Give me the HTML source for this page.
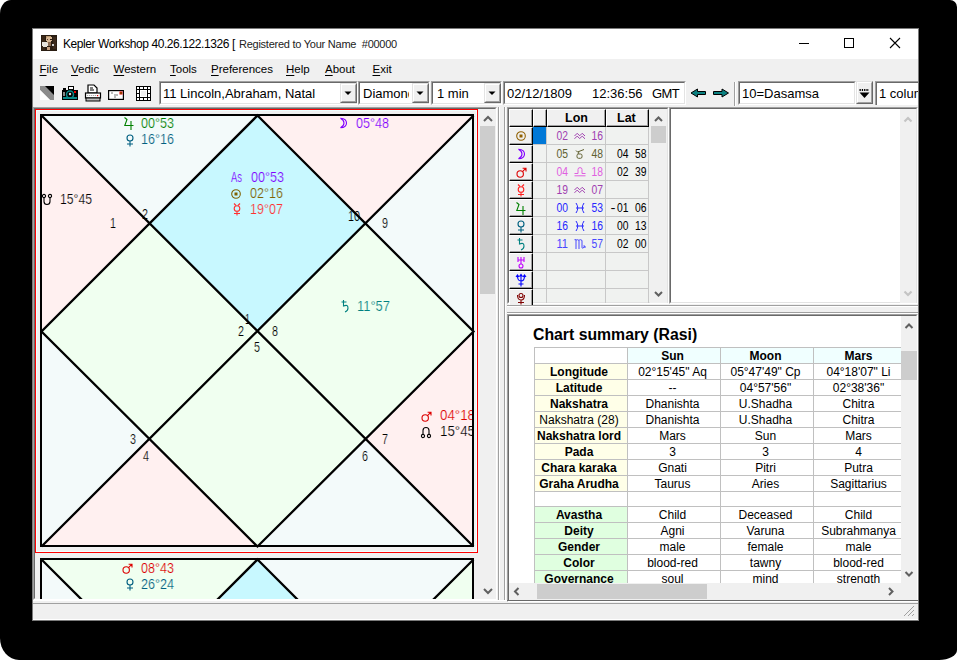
<!DOCTYPE html><html><head><meta charset="utf-8"><style>
html,body{margin:0;padding:0;width:957px;height:660px;overflow:hidden;background:#fff;}
body{font-family:"Liberation Sans", sans-serif;position:relative;} div{box-sizing:border-box;}
</style></head><body>
<div style="position:absolute;left:0px;top:0px;width:957px;height:660px;background:#000;border-radius:11px 7px 18px 19px / 14px 7px 10px 22px;"></div>
<div style="position:absolute;left:32px;top:28px;width:887px;height:593px;background:#f0f0f0;border:1px solid #7a7a7a;"></div>
<div style="position:absolute;left:33px;top:29px;width:885px;height:30px;background:#fff;"></div>
<svg style="position:absolute;left:41px;top:35px" width="16" height="16" viewBox="0 0 16 16"><rect width="16" height="16" fill="#2a1d12"/><rect x="1" y="1" width="3" height="14" fill="#3a2818"/><rect x="12" y="2" width="3" height="12" fill="#3c2a1c"/><path d="M5,1 H10 V2 H11 V6 H10 V8 H6 V6 H5Z" fill="#d8b896"/><path d="M5,1 H10 V2 H6 V3 H5Z" fill="#b89870"/><rect x="6" y="4" width="1" height="1" fill="#5a4030"/><rect x="9" y="4" width="2" height="1" fill="#2a1a10"/><path d="M7,7 H10 V11 H7Z" fill="#8a6a50"/><path d="M1,7 H6 V8 H7 V11 H6 V12 H2 V11 H1Z" fill="#e8e4dc"/><path d="M6,12 H9 V15 H6Z" fill="#c8a080"/><rect x="11" y="9" width="2" height="2" fill="#d0d0d0"/></svg>
<div style="position:absolute;left:63px;top:38px;font-size:12px;color:#000;font-weight:400;white-space:pre;line-height:1;letter-spacing:-0.42px;">Kepler Workshop 40.26.122.1326 [</div>
<div style="position:absolute;left:239px;top:39px;font-size:11px;color:#222;font-weight:400;white-space:pre;line-height:1;letter-spacing:-0.25px;">Registered to Your Name  #00000</div>
<svg style="position:absolute;left:790px;top:29px" width="128" height="30" viewBox="0 0 128 30"><path d="M9,14.5 H19" stroke="#000" stroke-width="1"/><rect x="54.5" y="9.5" width="9" height="9" fill="none" stroke="#000" stroke-width="1"/><path d="M100,9 L110,19 M110,9 L100,19" stroke="#000" stroke-width="1.1"/></svg>
<div style="position:absolute;left:39.5px;top:64px;font-size:11.5px;line-height:1;white-space:pre;color:#000"><span style="text-decoration:underline;text-underline-offset:2px">F</span>ile</div>
<div style="position:absolute;left:71px;top:64px;font-size:11.5px;line-height:1;white-space:pre;color:#000"><span style="text-decoration:underline;text-underline-offset:2px">V</span>edic</div>
<div style="position:absolute;left:113.5px;top:64px;font-size:11.5px;line-height:1;white-space:pre;color:#000"><span style="text-decoration:underline;text-underline-offset:2px">W</span>estern</div>
<div style="position:absolute;left:170px;top:64px;font-size:11.5px;line-height:1;white-space:pre;color:#000"><span style="text-decoration:underline;text-underline-offset:2px">T</span>ools</div>
<div style="position:absolute;left:211px;top:64px;font-size:11.5px;line-height:1;white-space:pre;color:#000"><span style="text-decoration:underline;text-underline-offset:2px">P</span>references</div>
<div style="position:absolute;left:286px;top:64px;font-size:11.5px;line-height:1;white-space:pre;color:#000"><span style="text-decoration:underline;text-underline-offset:2px">H</span>elp</div>
<div style="position:absolute;left:325px;top:64px;font-size:11.5px;line-height:1;white-space:pre;color:#000"><span style="text-decoration:underline;text-underline-offset:2px">A</span>bout</div>
<div style="position:absolute;left:372.5px;top:64px;font-size:11.5px;line-height:1;white-space:pre;color:#000"><span style="text-decoration:underline;text-underline-offset:2px">E</span>xit</div>
<svg style="position:absolute;left:36px;top:82px" width="120" height="22" viewBox="0 0 120 22"><path d="M4,4 H18 V18 Z" fill="#000"/><path d="M4,4 L9,4 L18,13 L18,18 L14,18 L4,8Z" fill="#8c8c8c"/><path d="M4,8 L14,18 L4,18Z" fill="#fff"/><g transform="translate(26,4)"><rect x="0" y="4" width="16" height="10" fill="#000"/><rect x="6" y="0" width="6" height="4" fill="#000"/><rect x="7" y="1" width="4" height="2" fill="#fff"/><rect x="1" y="2" width="3" height="2" fill="#000"/><rect x="1" y="11" width="14" height="2" fill="#0a8a8a"/><circle cx="8" cy="8.5" r="3.5" fill="none" stroke="#0a8a8a" stroke-width="1.5"/><circle cx="8" cy="8" r="1.2" fill="#ddd"/><rect x="12" y="5" width="2" height="2" fill="#e00"/><rect x="1" y="6" width="2" height="4" fill="#888"/></g><g transform="translate(49,3)"><path d="M3,0 H9 L12,3 V8 H3Z" fill="#fff" stroke="#000" stroke-width="1.2"/><path d="M5,3 H8 M5,5 H9" stroke="#000" stroke-width="1"/><rect x="0.5" y="8" width="15" height="5" fill="#fff" stroke="#000" stroke-width="1.2"/><path d="M2,10.5 H13" stroke="#aaa" stroke-width="1.2" stroke-dasharray="1.2,0.8"/><rect x="12" y="10" width="1.2" height="1.2" fill="#e00"/><rect x="1" y="13" width="14" height="3" fill="#bbb" stroke="#000" stroke-width="1"/></g><g transform="translate(72,8)"><rect x="0.6" y="0.6" width="14.8" height="8.8" fill="#fff" stroke="#000" stroke-width="1.2"/><path d="M3,3 H5 M6,5 H10 M6,7 H8" stroke="#666" stroke-width="0.9"/><rect x="11.5" y="1.5" width="3" height="3" fill="#e00"/><rect x="12.5" y="2.5" width="1.2" height="1.2" fill="#0a0"/></g><g transform="translate(100,4)"><rect x="0" y="0" width="15" height="15" fill="#000"/><path d="M1,1h2v2h-2z M4,1h3v2h-3z M8,1h3v2h-3z M12,1h2v2h-2z M1,12h2v2h-2z M4,12h3v2h-3z M8,12h3v2h-3z M12,12h2v2h-2z M1,4h2v3h-2z M1,8h2v3h-2z M12,4h2v3h-2z M12,8h2v3h-2z" fill="#fff"/><rect x="4" y="4" width="7" height="7" fill="#fff"/><rect x="5" y="5" width="5" height="5" fill="#eee"/></g></svg>
<div style="position:absolute;left:159px;top:81px;width:199px;height:24px;background:#fff;border-top:1px solid #a0a0a0;border-left:1px solid #a0a0a0;border-right:1px solid #fff;border-bottom:1px solid #fff;"><div style="position:absolute;left:0;top:0;right:0;bottom:0;border-top:1px solid #696969;border-left:1px solid #696969;border-right:1px solid #e3e3e3;border-bottom:1px solid #e3e3e3;"></div></div>
<div style="position:absolute;left:340px;top:83px;width:17px;height:20px;background:#f0f0f0;border-top:1px solid #e3e3e3;border-left:1px solid #e3e3e3;border-right:1px solid #696969;border-bottom:1px solid #696969;"><div style="position:absolute;left:0;top:0;right:0;bottom:0;border-top:1px solid #fff;border-left:1px solid #fff;border-right:1px solid #a0a0a0;border-bottom:1px solid #a0a0a0;"></div></div>
<svg style="position:absolute;left:340px;top:83px" width="17" height="20"><path d="M4.5,8.5 H11.5 L8,12Z" fill="#000"/></svg>
<div style="position:absolute;left:163px;top:87px;font-size:13px;color:#000;font-weight:400;white-space:pre;line-height:1;">11 Lincoln,Abraham, Natal</div>
<div style="position:absolute;left:358px;top:81px;width:72px;height:24px;background:#fff;border-top:1px solid #a0a0a0;border-left:1px solid #a0a0a0;border-right:1px solid #fff;border-bottom:1px solid #fff;"><div style="position:absolute;left:0;top:0;right:0;bottom:0;border-top:1px solid #696969;border-left:1px solid #696969;border-right:1px solid #e3e3e3;border-bottom:1px solid #e3e3e3;"></div></div>
<div style="position:absolute;left:362px;top:83px;width:47px;height:19px;overflow:hidden"><div style="position:absolute;left:1px;top:4px;font-size:13px;line-height:1;white-space:pre">Diamond</div></div>
<div style="position:absolute;left:412px;top:83px;width:17px;height:20px;background:#f0f0f0;border-top:1px solid #e3e3e3;border-left:1px solid #e3e3e3;border-right:1px solid #696969;border-bottom:1px solid #696969;"><div style="position:absolute;left:0;top:0;right:0;bottom:0;border-top:1px solid #fff;border-left:1px solid #fff;border-right:1px solid #a0a0a0;border-bottom:1px solid #a0a0a0;"></div></div>
<svg style="position:absolute;left:412px;top:83px" width="17" height="20"><path d="M4.5,8.5 H11.5 L8,12Z" fill="#000"/></svg>
<div style="position:absolute;left:431px;top:81px;width:71px;height:24px;background:#fff;border-top:1px solid #a0a0a0;border-left:1px solid #a0a0a0;border-right:1px solid #fff;border-bottom:1px solid #fff;"><div style="position:absolute;left:0;top:0;right:0;bottom:0;border-top:1px solid #696969;border-left:1px solid #696969;border-right:1px solid #e3e3e3;border-bottom:1px solid #e3e3e3;"></div></div>
<div style="position:absolute;left:437px;top:87px;font-size:13px;color:#000;font-weight:400;white-space:pre;line-height:1;">1 min</div>
<div style="position:absolute;left:484px;top:83px;width:17px;height:20px;background:#f0f0f0;border-top:1px solid #e3e3e3;border-left:1px solid #e3e3e3;border-right:1px solid #696969;border-bottom:1px solid #696969;"><div style="position:absolute;left:0;top:0;right:0;bottom:0;border-top:1px solid #fff;border-left:1px solid #fff;border-right:1px solid #a0a0a0;border-bottom:1px solid #a0a0a0;"></div></div>
<svg style="position:absolute;left:484px;top:83px" width="17" height="20"><path d="M4.5,8.5 H11.5 L8,12Z" fill="#000"/></svg>
<div style="position:absolute;left:503px;top:81px;width:183px;height:24px;background:#fff;border-top:1px solid #a0a0a0;border-left:1px solid #a0a0a0;border-right:1px solid #fff;border-bottom:1px solid #fff;"><div style="position:absolute;left:0;top:0;right:0;bottom:0;border-top:1px solid #696969;border-left:1px solid #696969;border-right:1px solid #e3e3e3;border-bottom:1px solid #e3e3e3;"></div></div>
<div style="position:absolute;left:507px;top:87px;font-size:13px;color:#000;font-weight:400;white-space:pre;line-height:1;">02/12/1809</div>
<div style="position:absolute;left:592px;top:87px;font-size:13px;color:#000;font-weight:400;white-space:pre;line-height:1;">12:36:56</div>
<div style="position:absolute;left:652px;top:87px;font-size:13px;color:#000;font-weight:400;white-space:pre;line-height:1;letter-spacing:-0.6px;">GMT</div>
<svg style="position:absolute;left:688px;top:86px" width="44" height="14" viewBox="0 0 44 14"><path d="M3,7 L9.5,3 L9.5,5.5 L17.5,5.5 L17.5,8.5 L9.5,8.5 L9.5,11Z" fill="#0a8080" stroke="#000" stroke-width="1"/><path d="M40.5,7 L34,3 L34,5.5 L25.5,5.5 L25.5,8.5 L34,8.5 L34,11Z" fill="#0a8080" stroke="#000" stroke-width="1"/></svg>
<div style="position:absolute;left:734px;top:82px;width:1px;height:24px;background:#a0a0a0;"></div>
<div style="position:absolute;left:735px;top:82px;width:1px;height:24px;background:#fff;"></div>
<div style="position:absolute;left:738px;top:81px;width:118px;height:24px;background:#fff;border-top:1px solid #a0a0a0;border-left:1px solid #a0a0a0;border-right:1px solid #fff;border-bottom:1px solid #fff;"><div style="position:absolute;left:0;top:0;right:0;bottom:0;border-top:1px solid #696969;border-left:1px solid #696969;border-right:1px solid #e3e3e3;border-bottom:1px solid #e3e3e3;"></div></div>
<div style="position:absolute;left:742px;top:87px;font-size:13px;color:#000;font-weight:400;white-space:pre;line-height:1;">10=Dasamsa</div>
<div style="position:absolute;left:856px;top:81px;width:17px;height:23px;background:#f0f0f0;border-top:1px solid #e3e3e3;border-left:1px solid #e3e3e3;border-right:1px solid #696969;border-bottom:1px solid #696969;"><div style="position:absolute;left:0;top:0;right:0;bottom:0;border-top:1px solid #fff;border-left:1px solid #fff;border-right:1px solid #a0a0a0;border-bottom:1px solid #a0a0a0;"></div></div>
<svg style="position:absolute;left:856px;top:81px" width="17" height="23"><path d="M3.5,9 H13" stroke="#000" stroke-width="2" stroke-dasharray="1.3,1"/><path d="M3.5,11.5 H13.5 L8.5,17Z" fill="#000"/></svg>
<div style="position:absolute;left:875px;top:81px;width:43px;height:24px;overflow:hidden">
<div style="position:absolute;left:0;top:0;width:60px;height:24px;background:#fff;border-top:1px solid #a0a0a0;border-left:1px solid #a0a0a0;"><div style="position:absolute;left:0;top:0;right:0;bottom:0;border-top:1px solid #696969;border-left:1px solid #696969;"></div></div>
<div style="position:absolute;left:4px;top:6px;font-size:13px;line-height:1;white-space:pre">1 column</div></div>
<div style="position:absolute;left:33px;top:107px;width:464px;height:493px;background:#f0f0f0;border-top:1px solid #a0a0a0;border-left:1px solid #a0a0a0;border-right:1px solid #fff;border-bottom:1px solid #fff;"><div style="position:absolute;left:0;top:0;right:0;bottom:0;border-top:1px solid #696969;border-left:1px solid #696969;border-right:1px solid #e3e3e3;border-bottom:1px solid #e3e3e3;"></div></div>
<div style="position:absolute;left:35px;top:109px;width:445px;height:490px;overflow:hidden;background:#f0f0f0">
<svg style="position:absolute;left:-35px;top:-109px" width="957" height="660" viewBox="0 0 957 660">
<rect x="35.5" y="109.5" width="442" height="443" fill="#f0f0f0" stroke="#ff0000" stroke-width="1"/>
<rect x="36.5" y="110.5" width="440" height="441" fill="none" stroke="#f0ffff" stroke-width="1"/>
<polygon points="257.5,115.5 365.5,223.5 257.5,331.5 149.5,223.5" fill="#c8f8ff"/>
<polygon points="41.5,331.5 149.5,223.5 257.5,331.5 149.5,439.0" fill="#f0fff0"/>
<polygon points="257.5,546.5 149.5,439.0 257.5,331.5 365.5,439.0" fill="#f0fff0"/>
<polygon points="473.5,331.5 365.5,223.5 257.5,331.5 365.5,439.0" fill="#f0fff0"/>
<polygon points="41,115 257.5,115 257.5,115.5 149.5,223.5 41.5,115.5" fill="#f3fafa"/>
<polygon points="41,115 41.5,115.5 149.5,223.5 41.5,331.5 41,331.5" fill="#fff0f0"/>
<polygon points="41,331.5 41.5,331.5 149.5,439.0 41.5,546.5 41,546" fill="#f3fafa"/>
<polygon points="41,546 41.5,546.5 149.5,439.0 257.5,546.5 257.5,546" fill="#fff0f0"/>
<polygon points="257.5,546 257.5,546.5 365.5,439.0 473.5,546.5 473,546" fill="#f3fafa"/>
<polygon points="473,331.5 473.5,331.5 473.5,546.5 365.5,439.0" fill="#fff0f0"/>
<polygon points="473,115 473.5,115.5 473.5,331.5 365.5,223.5" fill="#f3fafa"/>
<polygon points="257.5,115 473,115 473.5,115.5 365.5,223.5 257.5,115.5" fill="#fff0f0"/>
<polygon points="257.5,559.5 365.5,667.5 257.5,775.5 149.5,667.5" fill="#c8f8ff"/>
<polygon points="41.5,775.5 149.5,667.5 257.5,775.5 149.5,883.0" fill="#f0fff0"/>
<polygon points="257.5,990.5 149.5,883.0 257.5,775.5 365.5,883.0" fill="#f0fff0"/>
<polygon points="473.5,775.5 365.5,667.5 257.5,775.5 365.5,883.0" fill="#f0fff0"/>
<polygon points="41,559 257.5,559 257.5,559.5 149.5,667.5 41.5,559.5" fill="#f0fff0"/>
<polygon points="41,559 41.5,559.5 149.5,667.5 41.5,775.5 41,775.5" fill="#f3fafa"/>
<polygon points="41,775.5 41.5,775.5 149.5,883.0 41.5,990.5 41,990" fill="#f3fafa"/>
<polygon points="41,990 41.5,990.5 149.5,883.0 257.5,990.5 257.5,990" fill="#f0fff0"/>
<polygon points="257.5,990 257.5,990.5 365.5,883.0 473.5,990.5 473,990" fill="#f3fafa"/>
<polygon points="473,775.5 473.5,775.5 473.5,990.5 365.5,883.0" fill="#f0fff0"/>
<polygon points="473,559 473.5,559.5 473.5,775.5 365.5,667.5" fill="#f0fff0"/>
<polygon points="257.5,559 473,559 473.5,559.5 365.5,667.5 257.5,559.5" fill="#f3fafa"/>
<text x="141" y="128" font-family="Liberation Sans" font-size="14" fill="#008000" textLength="33" lengthAdjust="spacingAndGlyphs" stroke="#f3fafa" stroke-width="0.2">00°53</text>
<g transform="translate(124,117) scale(1.0)" stroke="#008000" stroke-width="1.1" color="#008000" fill="none"><path d="M0.5,0.5 L3,2.5 L0.8,8.5 L9.5,8.5 M7,4 L7,13" fill="none"/></g>
<text x="141" y="144" font-family="Liberation Sans" font-size="14" fill="#005f80" textLength="33" lengthAdjust="spacingAndGlyphs" stroke="#f3fafa" stroke-width="0.2">16°16</text>
<g transform="translate(125,134) scale(1.0)" stroke="#005f80" stroke-width="1.1" color="#005f80" fill="none"><circle cx="5" cy="4" r="3" fill="none"/><path d="M5,7 L5,12.5 M2,10 L8,10" fill="none"/></g>
<text x="356" y="128" font-family="Liberation Sans" font-size="14" fill="#8000ff" textLength="33" lengthAdjust="spacingAndGlyphs" stroke="#fff0f0" stroke-width="0.2">05°48</text>
<g transform="translate(338,117) scale(1.0)" stroke="#8000ff" stroke-width="1.1" color="#8000ff" fill="none"><path d="M2.5,1.2 Q8.5,1.5 8.5,6 Q8.5,10.5 2.5,10.8 Q6,9 6,6 Q6,3 2.5,1.2Z" fill="none"/></g>
<text x="60" y="204" font-family="Liberation Sans" font-size="14" fill="#000" textLength="32" lengthAdjust="spacingAndGlyphs" stroke="#fff0f0" stroke-width="0.2">15°45</text>
<g transform="translate(42,194) scale(1.0)" stroke="#000" stroke-width="1.1" color="#000" fill="none"><path d="M2,3.5 L2,7.5 Q2,10.5 5,10.5 Q8,10.5 8,7.5 L8,3.5" fill="none"/><circle cx="2" cy="2" r="1.6" fill="none"/><circle cx="8" cy="2" r="1.6" fill="none"/></g>
<text x="110" y="228" font-family="Liberation Sans" font-size="14" fill="#000" textLength="6" lengthAdjust="spacingAndGlyphs" stroke="#fff0f0" stroke-width="0.2">1</text>
<text x="142" y="219" font-family="Liberation Sans" font-size="14" fill="#000" textLength="6" lengthAdjust="spacingAndGlyphs" stroke="#f3fafa" stroke-width="0.2">2</text>
<text x="231" y="182" font-family="Liberation Sans" font-size="14" fill="#8000ff" textLength="11" lengthAdjust="spacingAndGlyphs" stroke="#c8f8ff" stroke-width="0.2">As</text>
<text x="251" y="182" font-family="Liberation Sans" font-size="14" fill="#8000ff" textLength="33" lengthAdjust="spacingAndGlyphs" stroke="#c8f8ff" stroke-width="0.2">00°53</text>
<text x="250" y="198" font-family="Liberation Sans" font-size="14" fill="#806000" textLength="33" lengthAdjust="spacingAndGlyphs" stroke="#c8f8ff" stroke-width="0.2">02°16</text>
<g transform="translate(231,188) scale(1.0)" stroke="#806000" stroke-width="1.1" color="#806000" fill="none"><circle cx="5" cy="6" r="4.3" fill="none"/><rect x="3.5" y="4.5" width="3" height="3" stroke="none" fill="currentColor"/></g>
<text x="250" y="214" font-family="Liberation Sans" font-size="14" fill="#ff3030" textLength="33" lengthAdjust="spacingAndGlyphs" stroke="#c8f8ff" stroke-width="0.2">19°07</text>
<g transform="translate(232,203) scale(1.0)" stroke="#ff3030" stroke-width="1.1" color="#ff3030" fill="none"><path d="M2,0.5 L4,2.5 M8,0.5 L6,2.5" fill="none"/><circle cx="5" cy="5.5" r="2.8" fill="none"/><path d="M5,8.3 L5,12.5 M2,10.5 L8,10.5" fill="none"/></g>
<text x="348" y="221" font-family="Liberation Sans" font-size="14" fill="#000" textLength="12" lengthAdjust="spacingAndGlyphs" stroke="#c8f8ff" stroke-width="0.2">10</text>
<text x="382" y="228" font-family="Liberation Sans" font-size="14" fill="#000" textLength="6" lengthAdjust="spacingAndGlyphs" stroke="#f3fafa" stroke-width="0.2">9</text>
<text x="357" y="311" font-family="Liberation Sans" font-size="14" fill="#008080" textLength="33" lengthAdjust="spacingAndGlyphs" stroke="#f0fff0" stroke-width="0.2">11°57</text>
<g transform="translate(340,300) scale(1.0)" stroke="#008080" stroke-width="1.1" color="#008080" fill="none"><path d="M1.5,2 L6.5,2 M3.5,0 L3.5,6 Q8,4 8,8 Q8,11 5,12" fill="none"/></g>
<text x="245" y="324" font-family="Liberation Sans" font-size="14" fill="#000" textLength="5" lengthAdjust="spacingAndGlyphs" stroke="#c8f8ff" stroke-width="0.2">1</text>
<text x="238" y="336" font-family="Liberation Sans" font-size="14" fill="#000" textLength="6" lengthAdjust="spacingAndGlyphs" stroke="#f0fff0" stroke-width="0.2">2</text>
<text x="272" y="336" font-family="Liberation Sans" font-size="14" fill="#000" textLength="6" lengthAdjust="spacingAndGlyphs" stroke="#f0fff0" stroke-width="0.2">8</text>
<text x="254" y="352" font-family="Liberation Sans" font-size="14" fill="#000" textLength="6" lengthAdjust="spacingAndGlyphs" stroke="#f0fff0" stroke-width="0.2">5</text>
<text x="130" y="444" font-family="Liberation Sans" font-size="14" fill="#000" textLength="6" lengthAdjust="spacingAndGlyphs" stroke="#f3fafa" stroke-width="0.2">3</text>
<text x="143" y="461" font-family="Liberation Sans" font-size="14" fill="#000" textLength="6" lengthAdjust="spacingAndGlyphs" stroke="#fff0f0" stroke-width="0.2">4</text>
<text x="382" y="444" font-family="Liberation Sans" font-size="14" fill="#000" textLength="6" lengthAdjust="spacingAndGlyphs" stroke="#fff0f0" stroke-width="0.2">7</text>
<text x="362" y="461" font-family="Liberation Sans" font-size="14" fill="#000" textLength="6" lengthAdjust="spacingAndGlyphs" stroke="#f3fafa" stroke-width="0.2">6</text>
<clipPath id="cl1"><rect x="0" y="0" width="473" height="660"/></clipPath><g clip-path="url(#cl1)">
<text x="440" y="420" font-family="Liberation Sans" font-size="14" fill="#dd0000" textLength="35" lengthAdjust="spacingAndGlyphs" stroke="#fff0f0" stroke-width="0.2">04°18</text>
<g transform="translate(421,410) scale(1.0)" stroke="#dd0000" stroke-width="1.1" color="#dd0000" fill="none"><circle cx="4.2" cy="8" r="3.2" fill="none"/><path d="M6.5,5.7 L10,2.2 M6.6,2.2 L10,2.2 L10,5.6" fill="none"/></g>
<text x="440" y="436" font-family="Liberation Sans" font-size="14" fill="#000" textLength="35" lengthAdjust="spacingAndGlyphs" stroke="#fff0f0" stroke-width="0.2">15°45</text>
<g transform="translate(421,426) scale(1.0)" stroke="#000" stroke-width="1.1" color="#000" fill="none"><path d="M2,8.5 L2,4.5 Q2,1.5 5,1.5 Q8,1.5 8,4.5 L8,8.5" fill="none"/><circle cx="2" cy="10" r="1.6" fill="none"/><circle cx="8" cy="10" r="1.6" fill="none"/></g>
</g>
<text x="141" y="573" font-family="Liberation Sans" font-size="14" fill="#dd0000" textLength="33" lengthAdjust="spacingAndGlyphs" stroke="#f0fff0" stroke-width="0.2">08°43</text>
<g transform="translate(122,562) scale(1.0)" stroke="#dd0000" stroke-width="1.1" color="#dd0000" fill="none"><circle cx="4.2" cy="8" r="3.2" fill="none"/><path d="M6.5,5.7 L10,2.2 M6.6,2.2 L10,2.2 L10,5.6" fill="none"/></g>
<text x="141" y="589" font-family="Liberation Sans" font-size="14" fill="#005f80" textLength="33" lengthAdjust="spacingAndGlyphs" stroke="#f0fff0" stroke-width="0.2">26°24</text>
<g transform="translate(125,578) scale(1.0)" stroke="#005f80" stroke-width="1.1" color="#005f80" fill="none"><circle cx="5" cy="4" r="3" fill="none"/><path d="M5,7 L5,12.5 M2,10 L8,10" fill="none"/></g>
<g stroke="#000" stroke-width="2.3" fill="none"><path d="M41.5,115.5 L473.5,546.5 M473.5,115.5 L41.5,546.5 M257.5,115.5 L473.5,331.5 L257.5,546.5 L41.5,331.5 Z"/></g><rect x="41" y="115" width="432" height="431" stroke="#000" stroke-width="2" fill="none"/>
<g stroke="#000" stroke-width="2.3" fill="none"><path d="M41.5,559.5 L473.5,990.5 M473.5,559.5 L41.5,990.5 M257.5,559.5 L473.5,775.5 L257.5,990.5 L41.5,775.5 Z"/></g><rect x="41" y="559" width="432" height="431" stroke="#000" stroke-width="2" fill="none"/>
</svg></div>
<div style="position:absolute;left:480px;top:109px;width:16px;height:490px;background:#f0f0f0;"></div>
<div style="position:absolute;left:480px;top:126px;width:15px;height:168px;background:#cdcdcd;"></div>
<svg style="position:absolute;left:480px;top:109px" width="16" height="490"><path d="M4,12 L8,8 L12,12" stroke="#606060" stroke-width="2" fill="none"/><path d="M4,480 L8,484 L12,480" stroke="#606060" stroke-width="2" fill="none"/></svg>
<div style="position:absolute;left:498px;top:107px;width:1px;height:493px;background:#a0a0a0;"></div>
<div style="position:absolute;left:499px;top:107px;width:1px;height:493px;background:#fff;"></div>
<div style="position:absolute;left:504px;top:107px;width:1px;height:493px;background:#a0a0a0;"></div>
<div style="position:absolute;left:505px;top:107px;width:1px;height:493px;background:#fff;"></div>
<div style="position:absolute;left:507px;top:107px;width:162px;height:197px;background:#f0f2f0;border-top:1px solid #a0a0a0;border-left:1px solid #a0a0a0;border-right:1px solid #fff;border-bottom:1px solid #fff;"><div style="position:absolute;left:0;top:0;right:0;bottom:0;border-top:1px solid #696969;border-left:1px solid #696969;border-right:1px solid #e3e3e3;border-bottom:1px solid #e3e3e3;"></div></div>
<div style="position:absolute;left:509px;top:109px;width:24px;height:18px;background:#f0f0f0;border-top:1px solid #fff;border-left:1px solid #fff;border-right:1px solid #000;border-bottom:1px solid #000;"><div style="position:absolute;left:0;top:0;right:0;bottom:0;border-right:1px solid #a0a0a0;border-bottom:1px solid #a0a0a0;"></div></div>
<div style="position:absolute;left:533px;top:109px;width:14px;height:18px;background:#f0f0f0;border-top:1px solid #fff;border-left:1px solid #fff;border-right:1px solid #000;border-bottom:1px solid #000;"><div style="position:absolute;left:0;top:0;right:0;bottom:0;border-right:1px solid #a0a0a0;border-bottom:1px solid #a0a0a0;"></div></div>
<div style="position:absolute;left:547px;top:109px;width:59px;height:18px;background:#f0f0f0;border-top:1px solid #fff;border-left:1px solid #fff;border-right:1px solid #000;border-bottom:1px solid #000;"><div style="position:absolute;left:0;top:0;right:0;bottom:0;border-right:1px solid #a0a0a0;border-bottom:1px solid #a0a0a0;"></div></div>
<div style="position:absolute;left:606px;top:109px;width:43px;height:18px;background:#f0f0f0;border-top:1px solid #fff;border-left:1px solid #fff;border-right:1px solid #000;border-bottom:1px solid #000;"><div style="position:absolute;left:0;top:0;right:0;bottom:0;border-right:1px solid #a0a0a0;border-bottom:1px solid #a0a0a0;"></div></div>
<div style="position:absolute;left:565px;top:112px;font-size:12.5px;color:#000;font-weight:700;white-space:pre;line-height:1;">Lon</div>
<div style="position:absolute;left:617px;top:112px;font-size:12.5px;color:#000;font-weight:700;white-space:pre;line-height:1;">Lat</div>
<svg style="position:absolute;left:509px;top:127px" width="141" height="176" viewBox="509 127 141 176">
<g stroke="#c8c8c8" stroke-width="1">
<path d="M533,144.5 H649"/>
<path d="M533,162.5 H649"/>
<path d="M533,180.5 H649"/>
<path d="M533,198.5 H649"/>
<path d="M533,216.5 H649"/>
<path d="M533,234.5 H649"/>
<path d="M533,252.5 H649"/>
<path d="M533,270.5 H649"/>
<path d="M533,288.5 H649"/>
<path d="M533,306.5 H649"/>
<path d="M546.5,127 V303"/>
<path d="M605.5,127 V303"/>
<path d="M648.5,127 V303"/>
</g></svg>
<div style="position:absolute;left:509px;top:127px;width:24px;height:18px;background:#f0f0f0;border-top:1px solid #fff;border-left:1px solid #fff;border-right:1px solid #000;border-bottom:1px solid #000;"><div style="position:absolute;left:0;top:0;right:0;bottom:0;border-right:1px solid #a0a0a0;border-bottom:1px solid #a0a0a0;"></div></div>
<div style="position:absolute;left:509px;top:145px;width:24px;height:18px;background:#f0f0f0;border-top:1px solid #fff;border-left:1px solid #fff;border-right:1px solid #000;border-bottom:1px solid #000;"><div style="position:absolute;left:0;top:0;right:0;bottom:0;border-right:1px solid #a0a0a0;border-bottom:1px solid #a0a0a0;"></div></div>
<div style="position:absolute;left:509px;top:163px;width:24px;height:18px;background:#f0f0f0;border-top:1px solid #fff;border-left:1px solid #fff;border-right:1px solid #000;border-bottom:1px solid #000;"><div style="position:absolute;left:0;top:0;right:0;bottom:0;border-right:1px solid #a0a0a0;border-bottom:1px solid #a0a0a0;"></div></div>
<div style="position:absolute;left:509px;top:181px;width:24px;height:18px;background:#f0f0f0;border-top:1px solid #fff;border-left:1px solid #fff;border-right:1px solid #000;border-bottom:1px solid #000;"><div style="position:absolute;left:0;top:0;right:0;bottom:0;border-right:1px solid #a0a0a0;border-bottom:1px solid #a0a0a0;"></div></div>
<div style="position:absolute;left:509px;top:199px;width:24px;height:18px;background:#f0f0f0;border-top:1px solid #fff;border-left:1px solid #fff;border-right:1px solid #000;border-bottom:1px solid #000;"><div style="position:absolute;left:0;top:0;right:0;bottom:0;border-right:1px solid #a0a0a0;border-bottom:1px solid #a0a0a0;"></div></div>
<div style="position:absolute;left:509px;top:217px;width:24px;height:18px;background:#f0f0f0;border-top:1px solid #fff;border-left:1px solid #fff;border-right:1px solid #000;border-bottom:1px solid #000;"><div style="position:absolute;left:0;top:0;right:0;bottom:0;border-right:1px solid #a0a0a0;border-bottom:1px solid #a0a0a0;"></div></div>
<div style="position:absolute;left:509px;top:235px;width:24px;height:18px;background:#f0f0f0;border-top:1px solid #fff;border-left:1px solid #fff;border-right:1px solid #000;border-bottom:1px solid #000;"><div style="position:absolute;left:0;top:0;right:0;bottom:0;border-right:1px solid #a0a0a0;border-bottom:1px solid #a0a0a0;"></div></div>
<div style="position:absolute;left:509px;top:253px;width:24px;height:18px;background:#f0f0f0;border-top:1px solid #fff;border-left:1px solid #fff;border-right:1px solid #000;border-bottom:1px solid #000;"><div style="position:absolute;left:0;top:0;right:0;bottom:0;border-right:1px solid #a0a0a0;border-bottom:1px solid #a0a0a0;"></div></div>
<div style="position:absolute;left:509px;top:271px;width:24px;height:18px;background:#f0f0f0;border-top:1px solid #fff;border-left:1px solid #fff;border-right:1px solid #000;border-bottom:1px solid #000;"><div style="position:absolute;left:0;top:0;right:0;bottom:0;border-right:1px solid #a0a0a0;border-bottom:1px solid #a0a0a0;"></div></div>
<div style="position:absolute;left:509px;top:289px;width:24px;height:18px;background:#f0f0f0;border-top:1px solid #fff;border-left:1px solid #fff;border-right:1px solid #000;border-bottom:1px solid #000;"><div style="position:absolute;left:0;top:0;right:0;bottom:0;border-right:1px solid #a0a0a0;border-bottom:1px solid #a0a0a0;"></div></div>
<div style="position:absolute;left:533px;top:127px;width:13px;height:17px;background:#0078d7;"></div>
<svg style="position:absolute;left:0;top:0" width="957" height="660" viewBox="0 0 957 660">
<g transform="translate(516,130) scale(1.0)" stroke="#906000" stroke-width="1.1" color="#906000" fill="none"><circle cx="5" cy="6" r="4.3" fill="none"/><rect x="3.5" y="4.5" width="3" height="3" stroke="none" fill="currentColor"/></g>
<g transform="translate(516,148) scale(1.0)" stroke="#8000ff" stroke-width="1.1" color="#8000ff" fill="none"><path d="M2.5,1.2 Q8.5,1.5 8.5,6 Q8.5,10.5 2.5,10.8 Q6,9 6,6 Q6,3 2.5,1.2Z" fill="none"/></g>
<g transform="translate(516,166) scale(1.0)" stroke="#dd0000" stroke-width="1.1" color="#dd0000" fill="none"><circle cx="4.2" cy="8" r="3.2" fill="none"/><path d="M6.5,5.7 L10,2.2 M6.6,2.2 L10,2.2 L10,5.6" fill="none"/></g>
<g transform="translate(516,184) scale(1.0)" stroke="#ff2020" stroke-width="1.1" color="#ff2020" fill="none"><path d="M2,0.5 L4,2.5 M8,0.5 L6,2.5" fill="none"/><circle cx="5" cy="5.5" r="2.8" fill="none"/><path d="M5,8.3 L5,12.5 M2,10.5 L8,10.5" fill="none"/></g>
<g transform="translate(516,202) scale(1.0)" stroke="#008000" stroke-width="1.1" color="#008000" fill="none"><path d="M0.5,0.5 L3,2.5 L0.8,8.5 L9.5,8.5 M7,4 L7,13" fill="none"/></g>
<g transform="translate(516,220) scale(1.0)" stroke="#006080" stroke-width="1.1" color="#006080" fill="none"><circle cx="5" cy="4" r="3" fill="none"/><path d="M5,7 L5,12.5 M2,10 L8,10" fill="none"/></g>
<g transform="translate(516,238) scale(1.0)" stroke="#008080" stroke-width="1.1" color="#008080" fill="none"><path d="M1.5,2 L6.5,2 M3.5,0 L3.5,6 Q8,4 8,8 Q8,11 5,12" fill="none"/></g>
<g transform="translate(516,256) scale(1.0)" stroke="#c000ff" stroke-width="1.1" color="#c000ff" fill="none"><path d="M2,1 L2,6 M8,1 L8,6 M2,4 L8,4 M5,1 L5,8" fill="none"/><circle cx="5" cy="10" r="2" fill="none"/></g>
<g transform="translate(516,274) scale(1.0)" stroke="#0000ff" stroke-width="1.1" color="#0000ff" fill="none"><path d="M1.5,2 Q1.5,7 5,7 Q8.5,7 8.5,2 M5,0.5 L5,12.5 M2.5,10 L7.5,10 M0,3 L1.5,1 L3,3 M3.5,2.5 L5,0.5 L6.5,2.5 M7,3 L8.5,1 L10,3" fill="none"/></g>
<g transform="translate(516,292) scale(1.0)" stroke="#800000" stroke-width="1.1" color="#800000" fill="none"><path d="M1.5,3 Q1.5,8 5,8 Q8.5,8 8.5,3 M5,8 L5,12.5 M2,10.5 L8,10.5" fill="none"/><circle cx="5" cy="3.5" r="2" fill="none"/></g>
<text x="556.5" y="140" font-family="Liberation Sans" font-size="12.5" fill="#a040b0" textLength="11.5" lengthAdjust="spacingAndGlyphs">02</text>
<g transform="translate(574.5,131)" stroke="#a040b0" stroke-width="1" fill="none"><path d="M0,5 L2.7,2.3 L5.2,4.8 L7.7,2.3 L10.5,5 M0,7.8 L2.7,5.1 L5.2,7.6 L7.7,5.1 L10.5,7.8" fill="none"/></g>
<text x="591.5" y="140" font-family="Liberation Sans" font-size="12.5" fill="#a040b0" textLength="11.5" lengthAdjust="spacingAndGlyphs">16</text>
<text x="556.5" y="158" font-family="Liberation Sans" font-size="12.5" fill="#606030" textLength="11.5" lengthAdjust="spacingAndGlyphs">05</text>
<g transform="translate(574.5,149)" stroke="#606030" stroke-width="1" fill="none"><path d="M1.5,1.5 L3,3 L9.5,0.5 M4.5,2.8 L3.5,5" fill="none"/><rect x="2.5" y="5" width="5" height="4.3" rx="1.5" fill="none"/></g>
<text x="591.5" y="158" font-family="Liberation Sans" font-size="12.5" fill="#606030" textLength="11.5" lengthAdjust="spacingAndGlyphs">48</text>
<text x="617" y="158" font-family="Liberation Sans" font-size="12.5" fill="#000" textLength="11.5" lengthAdjust="spacingAndGlyphs">04</text>
<text x="635" y="158" font-family="Liberation Sans" font-size="12.5" fill="#000" textLength="11.5" lengthAdjust="spacingAndGlyphs">58</text>
<text x="556.5" y="176" font-family="Liberation Sans" font-size="12.5" fill="#e060e0" textLength="11.5" lengthAdjust="spacingAndGlyphs">04</text>
<g transform="translate(574.5,167)" stroke="#e060e0" stroke-width="1" fill="none"><path d="M0,6.5 H3.5 V2.5 Q3.5,0.6 5.5,0.6 Q7.5,0.6 7.5,2.5 V6.5 H11 M0,8.8 H11" fill="none"/></g>
<text x="591.5" y="176" font-family="Liberation Sans" font-size="12.5" fill="#e060e0" textLength="11.5" lengthAdjust="spacingAndGlyphs">18</text>
<text x="617" y="176" font-family="Liberation Sans" font-size="12.5" fill="#000" textLength="11.5" lengthAdjust="spacingAndGlyphs">02</text>
<text x="635" y="176" font-family="Liberation Sans" font-size="12.5" fill="#000" textLength="11.5" lengthAdjust="spacingAndGlyphs">39</text>
<text x="556.5" y="194" font-family="Liberation Sans" font-size="12.5" fill="#a040b0" textLength="11.5" lengthAdjust="spacingAndGlyphs">19</text>
<g transform="translate(574.5,185)" stroke="#a040b0" stroke-width="1" fill="none"><path d="M0,5 L2.7,2.3 L5.2,4.8 L7.7,2.3 L10.5,5 M0,7.8 L2.7,5.1 L5.2,7.6 L7.7,5.1 L10.5,7.8" fill="none"/></g>
<text x="591.5" y="194" font-family="Liberation Sans" font-size="12.5" fill="#a040b0" textLength="11.5" lengthAdjust="spacingAndGlyphs">07</text>
<text x="556.5" y="212" font-family="Liberation Sans" font-size="12.5" fill="#2828ff" textLength="11.5" lengthAdjust="spacingAndGlyphs">00</text>
<g transform="translate(574.5,203)" stroke="#2828ff" stroke-width="1" fill="none"><path d="M1.5,0 Q5,5 1.5,10 M9.5,0 Q6,5 9.5,10 M1.5,5 H9.5" fill="none"/></g>
<text x="591.5" y="212" font-family="Liberation Sans" font-size="12.5" fill="#2828ff" textLength="11.5" lengthAdjust="spacingAndGlyphs">53</text>
<text x="610.5" y="212" font-family="Liberation Sans" font-size="12.5" fill="#000" textLength="5" lengthAdjust="spacingAndGlyphs">-</text>
<text x="617" y="212" font-family="Liberation Sans" font-size="12.5" fill="#000" textLength="11.5" lengthAdjust="spacingAndGlyphs">01</text>
<text x="635" y="212" font-family="Liberation Sans" font-size="12.5" fill="#000" textLength="11.5" lengthAdjust="spacingAndGlyphs">06</text>
<text x="556.5" y="230" font-family="Liberation Sans" font-size="12.5" fill="#2828ff" textLength="11.5" lengthAdjust="spacingAndGlyphs">16</text>
<g transform="translate(574.5,221)" stroke="#2828ff" stroke-width="1" fill="none"><path d="M1.5,0 Q5,5 1.5,10 M9.5,0 Q6,5 9.5,10 M1.5,5 H9.5" fill="none"/></g>
<text x="591.5" y="230" font-family="Liberation Sans" font-size="12.5" fill="#2828ff" textLength="11.5" lengthAdjust="spacingAndGlyphs">16</text>
<text x="617" y="230" font-family="Liberation Sans" font-size="12.5" fill="#000" textLength="11.5" lengthAdjust="spacingAndGlyphs">00</text>
<text x="635" y="230" font-family="Liberation Sans" font-size="12.5" fill="#000" textLength="11.5" lengthAdjust="spacingAndGlyphs">13</text>
<text x="556.5" y="248" font-family="Liberation Sans" font-size="12.5" fill="#4848ff" textLength="11.5" lengthAdjust="spacingAndGlyphs">11</text>
<g transform="translate(574.5,239)" stroke="#4848ff" stroke-width="1" fill="none"><path d="M0,0.7 H1.5 V10 M1.5,1.5 Q2,0.7 3,0.7 Q4.5,0.7 4.5,2 V10 M4.5,1.5 Q5,0.7 6,0.7 Q7.5,0.7 7.5,2 V8.5 Q7.5,9.5 8.5,9 L10.5,7.5 M8.8,7 H10.5 V9" fill="none"/></g>
<text x="591.5" y="248" font-family="Liberation Sans" font-size="12.5" fill="#4848ff" textLength="11.5" lengthAdjust="spacingAndGlyphs">57</text>
<text x="617" y="248" font-family="Liberation Sans" font-size="12.5" fill="#000" textLength="11.5" lengthAdjust="spacingAndGlyphs">02</text>
<text x="635" y="248" font-family="Liberation Sans" font-size="12.5" fill="#000" textLength="11.5" lengthAdjust="spacingAndGlyphs">00</text>
</svg>
<div style="position:absolute;left:650px;top:109px;width:17px;height:194px;background:#f0f0f0;"></div>
<div style="position:absolute;left:651px;top:126px;width:15px;height:17px;background:#cdcdcd;"></div>
<svg style="position:absolute;left:650px;top:109px" width="17" height="194"><path d="M5,12 L8.5,8.5 L12,12" stroke="#606060" stroke-width="2" fill="none"/><path d="M5,183 L8.5,186.5 L12,183" stroke="#606060" stroke-width="2" fill="none"/></svg>
<div style="position:absolute;left:669px;top:107px;width:249px;height:197px;background:#fff;border-top:1px solid #a0a0a0;border-left:1px solid #a0a0a0;border-right:1px solid #fff;border-bottom:1px solid #fff;"><div style="position:absolute;left:0;top:0;right:0;bottom:0;border-top:1px solid #696969;border-left:1px solid #696969;border-right:1px solid #e3e3e3;border-bottom:1px solid #e3e3e3;"></div></div>
<div style="position:absolute;left:900px;top:109px;width:16px;height:194px;background:#f0f0f0;"></div>
<svg style="position:absolute;left:900px;top:109px" width="16" height="194"><path d="M4.5,12.5 L8,9 L11.5,12.5" stroke="#c4c4c4" stroke-width="2.2" fill="none"/><path d="M4.5,182.5 L8,186 L11.5,182.5" stroke="#c4c4c4" stroke-width="2.2" fill="none"/></svg>
<div style="position:absolute;left:507px;top:305px;width:411px;height:1px;background:#a0a0a0;"></div>
<div style="position:absolute;left:507px;top:306px;width:411px;height:1px;background:#fff;"></div>
<div style="position:absolute;left:507px;top:312px;width:411px;height:1px;background:#a0a0a0;"></div>
<div style="position:absolute;left:507px;top:313px;width:411px;height:1px;background:#fff;"></div>
<div style="position:absolute;left:507px;top:314px;width:411px;height:288px;background:#fff;border-top:1px solid #a0a0a0;border-left:1px solid #a0a0a0;border-right:1px solid #fff;border-bottom:1px solid #fff;"><div style="position:absolute;left:0;top:0;right:0;bottom:0;border-top:1px solid #696969;border-left:1px solid #696969;border-right:1px solid #e3e3e3;border-bottom:1px solid #e3e3e3;"></div></div>
<div style="position:absolute;left:509px;top:316px;width:392px;height:267px;overflow:hidden;background:#fff">
<div style="position:absolute;left:24px;top:11px;font-size:15.8px;font-weight:700;line-height:1;white-space:pre">Chart summary (Rasi)</div>
<div style="position:absolute;left:25px;top:31px;width:94px;height:17px;background:#fff;border:1px solid #c0c0c0;font-size:12px;font-weight:700;text-align:center;line-height:16px;padding-right:4px;white-space:pre"></div>
<div style="position:absolute;left:118px;top:31px;width:94px;height:17px;background:#f0ffff;border:1px solid #c0c0c0;font-size:12px;font-weight:700;text-align:center;line-height:16px;padding-right:3px;white-space:pre">Sun</div>
<div style="position:absolute;left:211px;top:31px;width:94px;height:17px;background:#f0ffff;border:1px solid #c0c0c0;font-size:12px;font-weight:700;text-align:center;line-height:16px;padding-right:3px;white-space:pre">Moon</div>
<div style="position:absolute;left:304px;top:31px;width:94px;height:17px;background:#f0ffff;border:1px solid #c0c0c0;font-size:12px;font-weight:700;text-align:center;line-height:16px;padding-right:3px;white-space:pre">Mars</div>
<div style="position:absolute;left:25px;top:47px;width:94px;height:17px;background:#ffffe8;border:1px solid #c0c0c0;font-size:12px;font-weight:700;text-align:center;line-height:16px;padding-right:4px;white-space:pre">Longitude</div>
<div style="position:absolute;left:118px;top:47px;width:94px;height:17px;background:#fff;border:1px solid #c0c0c0;font-size:12px;font-weight:400;text-align:center;line-height:16px;padding-right:3px;white-space:pre">02°15'45" Aq</div>
<div style="position:absolute;left:211px;top:47px;width:94px;height:17px;background:#fff;border:1px solid #c0c0c0;font-size:12px;font-weight:400;text-align:center;line-height:16px;padding-right:3px;white-space:pre">05°47'49" Cp</div>
<div style="position:absolute;left:304px;top:47px;width:94px;height:17px;background:#fff;border:1px solid #c0c0c0;font-size:12px;font-weight:400;text-align:center;line-height:16px;padding-right:3px;white-space:pre">04°18'07" Li</div>
<div style="position:absolute;left:25px;top:63px;width:94px;height:17px;background:#ffffe8;border:1px solid #c0c0c0;font-size:12px;font-weight:700;text-align:center;line-height:16px;padding-right:4px;white-space:pre">Latitude</div>
<div style="position:absolute;left:118px;top:63px;width:94px;height:17px;background:#fff;border:1px solid #c0c0c0;font-size:12px;font-weight:400;text-align:center;line-height:16px;padding-right:3px;white-space:pre">--</div>
<div style="position:absolute;left:211px;top:63px;width:94px;height:17px;background:#fff;border:1px solid #c0c0c0;font-size:12px;font-weight:400;text-align:center;line-height:16px;padding-right:3px;white-space:pre">04°57'56"</div>
<div style="position:absolute;left:304px;top:63px;width:94px;height:17px;background:#fff;border:1px solid #c0c0c0;font-size:12px;font-weight:400;text-align:center;line-height:16px;padding-right:3px;white-space:pre">02°38'36"</div>
<div style="position:absolute;left:25px;top:79px;width:94px;height:17px;background:#ffffe8;border:1px solid #c0c0c0;font-size:12px;font-weight:700;text-align:center;line-height:16px;padding-right:4px;white-space:pre">Nakshatra</div>
<div style="position:absolute;left:118px;top:79px;width:94px;height:17px;background:#fff;border:1px solid #c0c0c0;font-size:12px;font-weight:400;text-align:center;line-height:16px;padding-right:3px;white-space:pre">Dhanishta</div>
<div style="position:absolute;left:211px;top:79px;width:94px;height:17px;background:#fff;border:1px solid #c0c0c0;font-size:12px;font-weight:400;text-align:center;line-height:16px;padding-right:3px;white-space:pre">U.Shadha</div>
<div style="position:absolute;left:304px;top:79px;width:94px;height:17px;background:#fff;border:1px solid #c0c0c0;font-size:12px;font-weight:400;text-align:center;line-height:16px;padding-right:3px;white-space:pre">Chitra</div>
<div style="position:absolute;left:25px;top:95px;width:94px;height:17px;background:#ffffe8;border:1px solid #c0c0c0;font-size:12px;font-weight:400;text-align:center;line-height:16px;padding-right:4px;white-space:pre">Nakshatra (28)</div>
<div style="position:absolute;left:118px;top:95px;width:94px;height:17px;background:#fff;border:1px solid #c0c0c0;font-size:12px;font-weight:400;text-align:center;line-height:16px;padding-right:3px;white-space:pre">Dhanishta</div>
<div style="position:absolute;left:211px;top:95px;width:94px;height:17px;background:#fff;border:1px solid #c0c0c0;font-size:12px;font-weight:400;text-align:center;line-height:16px;padding-right:3px;white-space:pre">U.Shadha</div>
<div style="position:absolute;left:304px;top:95px;width:94px;height:17px;background:#fff;border:1px solid #c0c0c0;font-size:12px;font-weight:400;text-align:center;line-height:16px;padding-right:3px;white-space:pre">Chitra</div>
<div style="position:absolute;left:25px;top:111px;width:94px;height:17px;background:#ffffe8;border:1px solid #c0c0c0;font-size:12px;font-weight:700;text-align:center;line-height:16px;padding-right:4px;white-space:pre">Nakshatra lord</div>
<div style="position:absolute;left:118px;top:111px;width:94px;height:17px;background:#fff;border:1px solid #c0c0c0;font-size:12px;font-weight:400;text-align:center;line-height:16px;padding-right:3px;white-space:pre">Mars</div>
<div style="position:absolute;left:211px;top:111px;width:94px;height:17px;background:#fff;border:1px solid #c0c0c0;font-size:12px;font-weight:400;text-align:center;line-height:16px;padding-right:3px;white-space:pre">Sun</div>
<div style="position:absolute;left:304px;top:111px;width:94px;height:17px;background:#fff;border:1px solid #c0c0c0;font-size:12px;font-weight:400;text-align:center;line-height:16px;padding-right:3px;white-space:pre">Mars</div>
<div style="position:absolute;left:25px;top:127px;width:94px;height:17px;background:#ffffe8;border:1px solid #c0c0c0;font-size:12px;font-weight:700;text-align:center;line-height:16px;padding-right:4px;white-space:pre">Pada</div>
<div style="position:absolute;left:118px;top:127px;width:94px;height:17px;background:#fff;border:1px solid #c0c0c0;font-size:12px;font-weight:400;text-align:center;line-height:16px;padding-right:3px;white-space:pre">3</div>
<div style="position:absolute;left:211px;top:127px;width:94px;height:17px;background:#fff;border:1px solid #c0c0c0;font-size:12px;font-weight:400;text-align:center;line-height:16px;padding-right:3px;white-space:pre">3</div>
<div style="position:absolute;left:304px;top:127px;width:94px;height:17px;background:#fff;border:1px solid #c0c0c0;font-size:12px;font-weight:400;text-align:center;line-height:16px;padding-right:3px;white-space:pre">4</div>
<div style="position:absolute;left:25px;top:143px;width:94px;height:17px;background:#ffffe8;border:1px solid #c0c0c0;font-size:12px;font-weight:700;text-align:center;line-height:16px;padding-right:4px;white-space:pre">Chara karaka</div>
<div style="position:absolute;left:118px;top:143px;width:94px;height:17px;background:#fff;border:1px solid #c0c0c0;font-size:12px;font-weight:400;text-align:center;line-height:16px;padding-right:3px;white-space:pre">Gnati</div>
<div style="position:absolute;left:211px;top:143px;width:94px;height:17px;background:#fff;border:1px solid #c0c0c0;font-size:12px;font-weight:400;text-align:center;line-height:16px;padding-right:3px;white-space:pre">Pitri</div>
<div style="position:absolute;left:304px;top:143px;width:94px;height:17px;background:#fff;border:1px solid #c0c0c0;font-size:12px;font-weight:400;text-align:center;line-height:16px;padding-right:3px;white-space:pre">Putra</div>
<div style="position:absolute;left:25px;top:159px;width:94px;height:17px;background:#ffffe8;border:1px solid #c0c0c0;font-size:12px;font-weight:700;text-align:center;line-height:16px;padding-right:4px;white-space:pre">Graha Arudha</div>
<div style="position:absolute;left:118px;top:159px;width:94px;height:17px;background:#fff;border:1px solid #c0c0c0;font-size:12px;font-weight:400;text-align:center;line-height:16px;padding-right:3px;white-space:pre">Taurus</div>
<div style="position:absolute;left:211px;top:159px;width:94px;height:17px;background:#fff;border:1px solid #c0c0c0;font-size:12px;font-weight:400;text-align:center;line-height:16px;padding-right:3px;white-space:pre">Aries</div>
<div style="position:absolute;left:304px;top:159px;width:94px;height:17px;background:#fff;border:1px solid #c0c0c0;font-size:12px;font-weight:400;text-align:center;line-height:16px;padding-right:3px;white-space:pre">Sagittarius</div>
<div style="position:absolute;left:25px;top:175px;width:94px;height:17px;background:#fff;border:1px solid #c0c0c0;font-size:12px;font-weight:400;text-align:center;line-height:16px;padding-right:4px;white-space:pre"></div>
<div style="position:absolute;left:118px;top:175px;width:94px;height:17px;background:#fff;border:1px solid #c0c0c0;font-size:12px;font-weight:400;text-align:center;line-height:16px;padding-right:3px;white-space:pre"></div>
<div style="position:absolute;left:211px;top:175px;width:94px;height:17px;background:#fff;border:1px solid #c0c0c0;font-size:12px;font-weight:400;text-align:center;line-height:16px;padding-right:3px;white-space:pre"></div>
<div style="position:absolute;left:304px;top:175px;width:94px;height:17px;background:#fff;border:1px solid #c0c0c0;font-size:12px;font-weight:400;text-align:center;line-height:16px;padding-right:3px;white-space:pre"></div>
<div style="position:absolute;left:25px;top:190px;width:94px;height:17px;background:#e0ffe0;border:1px solid #c0c0c0;font-size:12px;font-weight:700;text-align:center;line-height:16px;padding-right:4px;white-space:pre">Avastha</div>
<div style="position:absolute;left:118px;top:190px;width:94px;height:17px;background:#fff;border:1px solid #c0c0c0;font-size:12px;font-weight:400;text-align:center;line-height:16px;padding-right:3px;white-space:pre">Child</div>
<div style="position:absolute;left:211px;top:190px;width:94px;height:17px;background:#fff;border:1px solid #c0c0c0;font-size:12px;font-weight:400;text-align:center;line-height:16px;padding-right:3px;white-space:pre">Deceased</div>
<div style="position:absolute;left:304px;top:190px;width:94px;height:17px;background:#fff;border:1px solid #c0c0c0;font-size:12px;font-weight:400;text-align:center;line-height:16px;padding-right:3px;white-space:pre">Child</div>
<div style="position:absolute;left:25px;top:206px;width:94px;height:17px;background:#e0ffe0;border:1px solid #c0c0c0;font-size:12px;font-weight:700;text-align:center;line-height:16px;padding-right:4px;white-space:pre">Deity</div>
<div style="position:absolute;left:118px;top:206px;width:94px;height:17px;background:#fff;border:1px solid #c0c0c0;font-size:12px;font-weight:400;text-align:center;line-height:16px;padding-right:3px;white-space:pre">Agni</div>
<div style="position:absolute;left:211px;top:206px;width:94px;height:17px;background:#fff;border:1px solid #c0c0c0;font-size:12px;font-weight:400;text-align:center;line-height:16px;padding-right:3px;white-space:pre">Varuna</div>
<div style="position:absolute;left:304px;top:206px;width:94px;height:17px;background:#fff;border:1px solid #c0c0c0;font-size:12px;font-weight:400;text-align:center;line-height:16px;padding-right:3px;white-space:pre">Subrahmanya</div>
<div style="position:absolute;left:25px;top:222px;width:94px;height:17px;background:#e0ffe0;border:1px solid #c0c0c0;font-size:12px;font-weight:700;text-align:center;line-height:16px;padding-right:4px;white-space:pre">Gender</div>
<div style="position:absolute;left:118px;top:222px;width:94px;height:17px;background:#fff;border:1px solid #c0c0c0;font-size:12px;font-weight:400;text-align:center;line-height:16px;padding-right:3px;white-space:pre">male</div>
<div style="position:absolute;left:211px;top:222px;width:94px;height:17px;background:#fff;border:1px solid #c0c0c0;font-size:12px;font-weight:400;text-align:center;line-height:16px;padding-right:3px;white-space:pre">female</div>
<div style="position:absolute;left:304px;top:222px;width:94px;height:17px;background:#fff;border:1px solid #c0c0c0;font-size:12px;font-weight:400;text-align:center;line-height:16px;padding-right:3px;white-space:pre">male</div>
<div style="position:absolute;left:25px;top:238px;width:94px;height:17px;background:#e0ffe0;border:1px solid #c0c0c0;font-size:12px;font-weight:700;text-align:center;line-height:16px;padding-right:4px;white-space:pre">Color</div>
<div style="position:absolute;left:118px;top:238px;width:94px;height:17px;background:#fff;border:1px solid #c0c0c0;font-size:12px;font-weight:400;text-align:center;line-height:16px;padding-right:3px;white-space:pre">blood-red</div>
<div style="position:absolute;left:211px;top:238px;width:94px;height:17px;background:#fff;border:1px solid #c0c0c0;font-size:12px;font-weight:400;text-align:center;line-height:16px;padding-right:3px;white-space:pre">tawny</div>
<div style="position:absolute;left:304px;top:238px;width:94px;height:17px;background:#fff;border:1px solid #c0c0c0;font-size:12px;font-weight:400;text-align:center;line-height:16px;padding-right:3px;white-space:pre">blood-red</div>
<div style="position:absolute;left:25px;top:254px;width:94px;height:17px;background:#e0ffe0;border:1px solid #c0c0c0;font-size:12px;font-weight:700;text-align:center;line-height:16px;padding-right:4px;white-space:pre">Governance</div>
<div style="position:absolute;left:118px;top:254px;width:94px;height:17px;background:#fff;border:1px solid #c0c0c0;font-size:12px;font-weight:400;text-align:center;line-height:16px;padding-right:3px;white-space:pre">soul</div>
<div style="position:absolute;left:211px;top:254px;width:94px;height:17px;background:#fff;border:1px solid #c0c0c0;font-size:12px;font-weight:400;text-align:center;line-height:16px;padding-right:3px;white-space:pre">mind</div>
<div style="position:absolute;left:304px;top:254px;width:94px;height:17px;background:#fff;border:1px solid #c0c0c0;font-size:12px;font-weight:400;text-align:center;line-height:16px;padding-right:3px;white-space:pre">strength</div>
</div>
<div style="position:absolute;left:901px;top:316px;width:16px;height:267px;background:#f0f0f0;"></div>
<div style="position:absolute;left:901px;top:351px;width:16px;height:29px;background:#cdcdcd;"></div>
<svg style="position:absolute;left:901px;top:316px" width="16" height="267"><path d="M4.5,12 L8,8.5 L11.5,12" stroke="#606060" stroke-width="2" fill="none"/><path d="M4.5,256 L8,259.5 L11.5,256" stroke="#606060" stroke-width="2" fill="none"/></svg>
<div style="position:absolute;left:509px;top:583px;width:392px;height:17px;background:#f0f0f0;"></div>
<div style="position:absolute;left:537px;top:584px;width:170px;height:15px;background:#cdcdcd;"></div>
<svg style="position:absolute;left:509px;top:583px" width="392" height="17"><path d="M9.5,5 L6,8.5 L9.5,12" stroke="#606060" stroke-width="2" fill="none"/><path d="M380,5 L383.5,8.5 L380,12" stroke="#606060" stroke-width="2" fill="none"/></svg>
<div style="position:absolute;left:901px;top:583px;width:16px;height:17px;background:#f0f0f0;"></div>
<div style="position:absolute;left:33px;top:600px;width:474px;height:1px;background:#fff;"></div>
<div style="position:absolute;left:507px;top:600px;width:411px;height:1px;background:#696969;"></div>
<div style="position:absolute;left:33px;top:603px;width:885px;height:1px;background:#a0a0a0;"></div>
<div style="position:absolute;left:33px;top:619px;width:885px;height:1px;background:#fff;"></div>
<svg style="position:absolute;left:902px;top:604px" width="14" height="14"><path d="M12,2 L2,12 M12,6 L6,12 M12,10 L10,12" stroke="#a0a0a0" stroke-width="1"/></svg>
</body></html>
